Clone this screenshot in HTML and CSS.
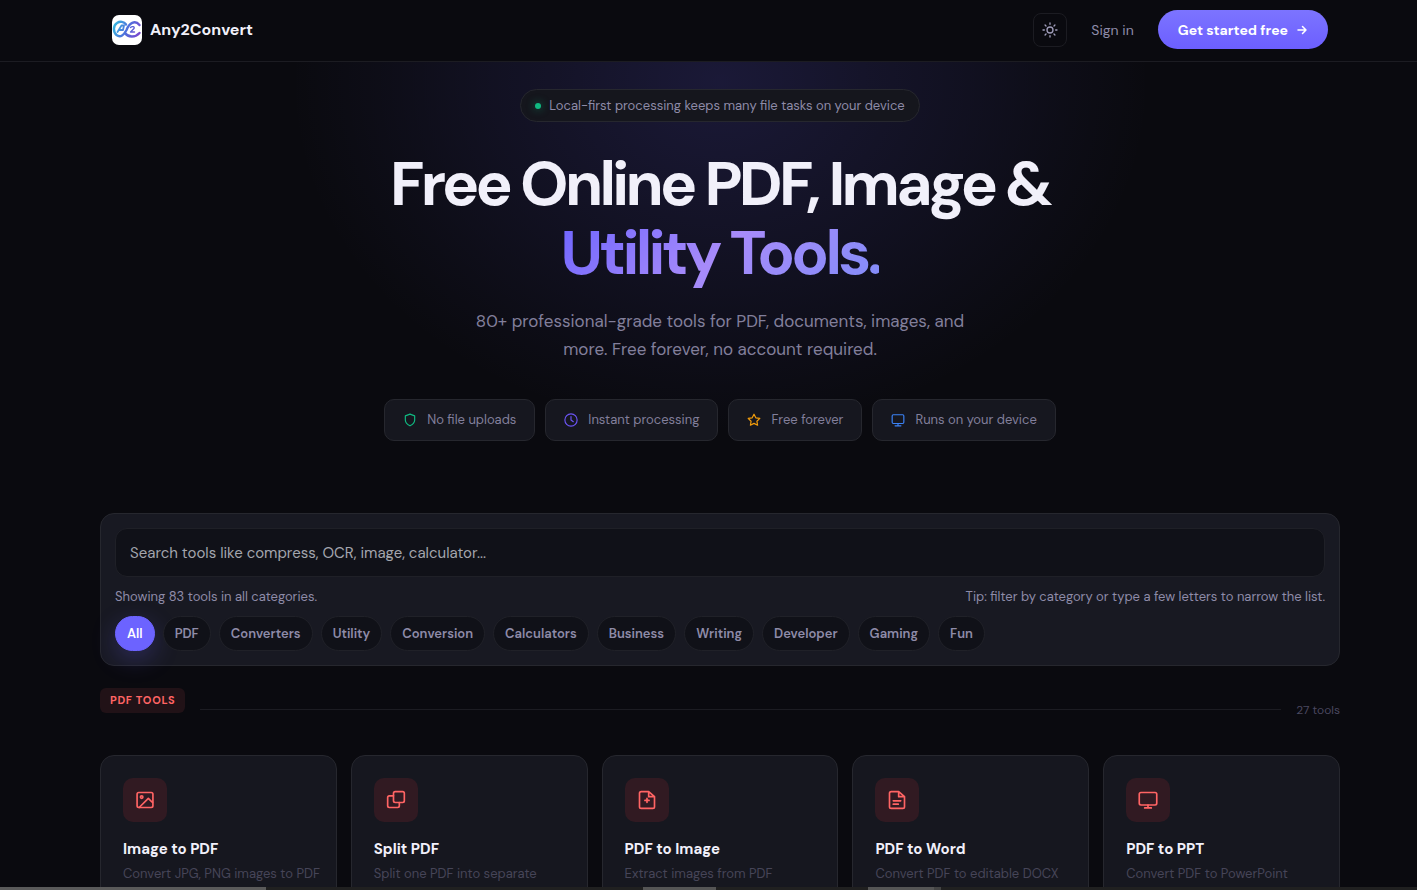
FILE: index.html
```html
<!DOCTYPE html>
<html lang="en">
<head>
    <meta charset="UTF-8">
    <meta name="viewport" content="width=device-width, initial-scale=1.0">
    <title>Any2Convert</title>
    <link rel="stylesheet" href="styles.css">
</head>
<body>
    <header class="site-header">
        <a href="#" class="brand">
            <svg class="brand-logo" viewBox="0 0 30 30" fill="none" aria-hidden="true">
                <defs>
                    <linearGradient id="logoGradient" gradientUnits="userSpaceOnUse" x1="2" y1="8" x2="28" y2="20">
                        <stop offset="0" stop-color="#35b8df"/>
                        <stop offset="0.5" stop-color="#4e70dc"/>
                        <stop offset="1" stop-color="#7a45cd"/>
                    </linearGradient>
                </defs>
                <rect width="30" height="30" rx="7" fill="#fff"/>
                <g stroke="url(#logoGradient)" stroke-linecap="round" stroke-linejoin="round">
                    <path d="M14 9.500C12 6.500 8 6 5 8C1 10.500 1 17 4.500 20C8.500 23 12 20 14.500 15C17 8 23 4.500 27.500 10" stroke-width="2.400"/>
                    <path d="M13 18C16 22.500 23 23 27.500 18" stroke-width="2.400"/>
                    <path d="M5.500 17L9.500 10.500H12L11 15M7.500 15H11" stroke-width="1.800"/>
                    <path d="M18.500 12.500C20 11 23 11.500 22 13.500L18.500 17H22.500" stroke-width="1.400"/>
                </g>
            </svg>
            <span>Any2Convert</span>
        </a>
        <nav class="header-actions">
            <button type="button" class="theme-toggle" aria-label="Toggle theme">
                <svg class="icon" viewBox="0 0 24 24">
                    <circle cx="12" cy="12" r="4.500"/>
                    <path d="M12 1.500v2M12 20.500v2M4.600 4.600l1.400 1.400M18 18l1.400 1.400M1.500 12h2M20.500 12h2M4.600 19.400l1.400-1.400M18 6l1.400-1.400"/>
                </svg>
            </button>
            <a href="#" class="sign-in">Sign in</a>
            <a href="#" class="cta">
                Get started free
                <svg class="icon" viewBox="0 0 24 24"><path d="M4 12h16M13 5l7 7-7 7"/></svg>
            </a>
        </nav>
    </header>

    <main>
        <section class="hero">
            <div class="hero-badge"><span class="dot"></span>Local-first processing keeps many file tasks on your device</div>
            <h1>Free Online PDF, Image &amp;<br><span class="gradient-text">Utility Tools.</span></h1>
            <p class="hero-sub">80+ professional-grade tools for PDF, documents, images, and more. Free forever, no account required.</p>
            <ul class="features">
                <li>
                    <svg class="icon green" viewBox="0 0 24 24"><path d="M12 22s8-4 8-10V5l-8-3-8 3v7c0 6 8 10 8 10z"/></svg>
                    No file uploads
                </li>
                <li>
                    <svg class="icon purple" viewBox="0 0 24 24"><circle cx="12" cy="12" r="10.500"/><path d="M12 6v6l4 3"/></svg>
                    Instant processing
                </li>
                <li>
                    <svg class="icon amber" viewBox="0 0 24 24"><path d="M12 2l3.100 6.300 6.900 1-5 4.900 1.200 6.800-6.200-3.200L5.800 21 7 14.200 2 9.300l6.900-1z"/></svg>
                    Free forever
                </li>
                <li>
                    <svg class="icon blue" viewBox="0 0 24 24"><rect x="2" y="3" width="20" height="15" rx="2"/><path d="M7 22h10M12 18v4"/></svg>
                    Runs on your device
                </li>
            </ul>
        </section>

        <div class="container">
            <section class="filter-panel">
                <input type="search" class="search-input" aria-label="Search tools" placeholder="Search tools like compress, OCR, image, calculator...">
                <div class="filter-meta">
                    <span>Showing 83 tools in all categories.</span>
                    <span>Tip: filter by category or type a few letters to narrow the list.</span>
                </div>
                <div class="filter-chips">
                    <button type="button" class="chip active">All</button>
                    <button type="button" class="chip">PDF</button>
                    <button type="button" class="chip">Converters</button>
                    <button type="button" class="chip">Utility</button>
                    <button type="button" class="chip">Conversion</button>
                    <button type="button" class="chip">Calculators</button>
                    <button type="button" class="chip">Business</button>
                    <button type="button" class="chip">Writing</button>
                    <button type="button" class="chip">Developer</button>
                    <button type="button" class="chip">Gaming</button>
                    <button type="button" class="chip">Fun</button>
                </div>
            </section>

            <section class="tools">
                <div class="section-head">
                    <h2>PDF TOOLS</h2>
                    <span class="rule"></span>
                    <span class="count">27 tools</span>
                </div>
                <div class="tool-grid">
                    <a href="#" class="tool-card">
                        <span class="tool-icon"><svg class="icon" viewBox="0 0 24 24"><rect x="2.500" y="3" width="19" height="18" rx="2"/><circle cx="8" cy="8.500" r="1.500"/><path d="M21 15l-5-5L5 21"/></svg></span>
                        <h3>Image to PDF</h3>
                        <p>Convert JPG, PNG images to PDF</p>
                    </a>
                    <a href="#" class="tool-card">
                        <span class="tool-icon"><svg class="icon" viewBox="0 0 24 24"><rect x="9" y="2" width="13" height="13" rx="2"/><path d="M9 7H4a2 2 0 0 0-2 2v10a2 2 0 0 0 2 2h10a2 2 0 0 0 2-2v-4"/></svg></span>
                        <h3>Split PDF</h3>
                        <p>Split one PDF into separate</p>
                    </a>
                    <a href="#" class="tool-card">
                        <span class="tool-icon"><svg class="icon" viewBox="0 0 24 24"><path d="M14 2H5a2 2 0 0 0-2 2v16a2 2 0 0 0 2 2h14a2 2 0 0 0 2-2V8zM14 2v6h6M12 10v5M9.500 12.500h5"/></svg></span>
                        <h3>PDF to Image</h3>
                        <p>Extract images from PDF</p>
                    </a>
                    <a href="#" class="tool-card">
                        <span class="tool-icon"><svg class="icon" viewBox="0 0 24 24"><path d="M14 2H5a2 2 0 0 0-2 2v16a2 2 0 0 0 2 2h14a2 2 0 0 0 2-2V8zM14 2v6h6M7.500 13h9M7.500 17h6"/></svg></span>
                        <h3>PDF to Word</h3>
                        <p>Convert PDF to editable DOCX</p>
                    </a>
                    <a href="#" class="tool-card">
                        <span class="tool-icon"><svg class="icon" viewBox="0 0 24 24"><rect x="1.500" y="3" width="21" height="15" rx="2"/><path d="M8 21.500h8M12 18v3"/></svg></span>
                        <h3>PDF to PPT</h3>
                        <p>Convert PDF to PowerPoint</p>
                    </a>
                </div>
            </section>
        </div>
    </main>
    <div class="bottom-strip"></div>
</body>
</html>
```

FILE: styles.css
```css
:root {
    --bg: #0a0a0f;
    --card: #16171f;
    --border: #26272e;
    --text: #f1f0fa;
    --muted: #8e8ba8;
    --accent: #6c63ff;
    --red: #ff6464;
}

* {
    margin: 0;
    padding: 0;
    box-sizing: border-box;
}

html {
    scrollbar-width: none;
}

body {
    background-color: var(--bg);
    color: var(--text);
    font-family: 'DM Sans', Inter, sans-serif;
    font-size: 13px;
    line-height: 20px;
    overflow-x: hidden;
}

a {
    color: inherit;
    text-decoration: none;
}

button,
input {
    font-family: inherit;
}

.icon {
    width: 14px;
    height: 14px;
    flex-shrink: 0;
    fill: none;
    stroke: currentColor;
    stroke-width: 2;
    stroke-linecap: round;
    stroke-linejoin: round;
}

/* Header */
.site-header {
    display: flex;
    align-items: center;
    justify-content: space-between;
    height: 62px;
    padding: 0 89px 2px 112px;
    border-bottom: 1px solid #1c1c22;
}

.brand {
    display: flex;
    align-items: center;
    gap: 8px;
    font-size: 16px;
    font-weight: 700;
}

.brand-logo {
    width: 30px;
    height: 30px;
}

.header-actions {
    display: flex;
    align-items: center;
    gap: 24px;
}

.theme-toggle {
    display: flex;
    align-items: center;
    justify-content: center;
    width: 34px;
    height: 34px;
    background: transparent;
    border: 1px solid #1c1c22;
    border-radius: 8px;
    color: #a09dba;
    cursor: pointer;
}

.theme-toggle .icon {
    width: 16px;
    height: 16px;
}

.sign-in {
    color: var(--muted);
    font-size: 14px;
}

.cta {
    display: flex;
    align-items: center;
    gap: 8px;
    height: 39px;
    padding: 0 20px;
    border-radius: 20px;
    background: linear-gradient(180deg, #7c74ff, #6c5fff);
    color: #fff;
    font-size: 14px;
    font-weight: 700;
}

.cta .icon {
    width: 12px;
    height: 12px;
    stroke-width: 3;
}

/* Hero */
.hero {
    display: flex;
    flex-direction: column;
    align-items: center;
    padding: 27px 77px 72px 100px;
    text-align: center;
    background: radial-gradient(ellipse 430px 350px at calc(50% + 12px) 20px, rgba(108, 99, 255, 0.17), transparent);
}

.hero-badge {
    display: flex;
    align-items: center;
    gap: 8px;
    height: 33px;
    padding: 0 14px;
    border: 1px solid var(--border);
    border-radius: 17px;
    background-color: #15161d;
    color: var(--muted);
}

.dot {
    width: 6px;
    height: 6px;
    border-radius: 50%;
    background-color: #10b981;
    box-shadow: 0 0 8px rgba(16, 185, 129, 0.6);
}

h1 {
    margin: 27px 0 20px;
    font-size: 62px;
    font-weight: 700;
    line-height: 69px;
    letter-spacing: -0.06em;
}

.gradient-text {
    background: linear-gradient(135deg, #6c63ff 0%, #a78bfa 50%, #818cf8 100%);
    -webkit-background-clip: text;
    background-clip: text;
    color: transparent;
}

.hero-sub {
    max-width: 520px;
    margin-bottom: 36px;
    color: #827f9b;
    font-size: 17px;
    line-height: 28px;
}

.features {
    display: flex;
    flex-wrap: wrap;
    justify-content: center;
    gap: 10px;
    list-style: none;
}

.features li {
    display: flex;
    align-items: center;
    gap: 10px;
    height: 42px;
    padding: 0 18px;
    border: 1px solid var(--border);
    border-radius: 10px;
    background-color: var(--card);
    color: #827f9b;
}

.green { color: #10b981; }
.purple { color: #6c55f5; }
.amber { color: #f59e0b; }
.blue { color: #3b82f6; }

/* Search and filters */
.container {
    padding: 0 77px 0 100px;
}

.filter-panel {
    display: flex;
    flex-direction: column;
    gap: 10px;
    padding: 14px;
    border: 1px solid var(--border);
    border-radius: 14px;
    background-color: #181922;
}

.search-input {
    width: 100%;
    height: 49px;
    padding: 0 14px;
    border: 1px solid #1f2027;
    border-radius: 12px;
    background-color: #101118;
    color: var(--text);
    font-size: 15px;
    outline: none;
}

.search-input::placeholder {
    color: #a3a5ad;
}

.search-input:focus {
    border-color: var(--accent);
}

.filter-meta {
    display: flex;
    justify-content: space-between;
    color: var(--muted);
    line-height: 19px;
}

.filter-chips {
    display: flex;
    flex-wrap: wrap;
    gap: 8px;
}

.chip {
    height: 35px;
    padding: 0 11px;
    border: 1px solid #202128;
    border-radius: 18px;
    background-color: #101118;
    color: var(--muted);
    font-size: 13px;
    font-weight: 600;
    cursor: pointer;
}

.chip.active {
    border-color: var(--accent);
    background-color: var(--accent);
    color: #fff;
    box-shadow: 0 8px 24px rgba(108, 99, 255, 0.25);
}

/* Tool sections */
.section-head {
    display: flex;
    align-items: center;
    gap: 15px;
    padding-top: 22px;
    margin-bottom: 24px;
}

.section-head h2 {
    margin-bottom: 18px;
    padding: 0 10px;
    border-radius: 6px;
    background-color: #211217;
    color: var(--red);
    font-size: 11px;
    font-weight: 700;
    line-height: 25px;
    letter-spacing: 0.06em;
}

.rule {
    flex: 1;
    height: 1px;
    background-color: #1c1c22;
}

.count {
    color: #4a4860;
    font-size: 12px;
}

.tool-grid {
    display: grid;
    grid-template-columns: repeat(5, minmax(0, 1fr));
    gap: 14px;
}

.tool-card {
    padding: 22px;
    border: 1px solid var(--border);
    border-radius: 14px;
    background-color: var(--card);
}

.tool-icon {
    display: flex;
    align-items: center;
    justify-content: center;
    width: 44px;
    height: 44px;
    margin-bottom: 16px;
    border-radius: 10px;
    background-color: #311a22;
    color: var(--red);
}

.tool-icon .icon {
    width: 20px;
    height: 20px;
}

.tool-card h3 {
    margin-bottom: 4px;
    font-size: 15px;
    font-weight: 700;
    line-height: 22px;
}

.tool-card p {
    color: #464558;
    white-space: nowrap;
}

/* Strip along the bottom edge of the window */
.bottom-strip {
    position: fixed;
    right: 0;
    bottom: 0;
    left: 0;
    height: 3px;
    background: linear-gradient(90deg,
        #5a5a5a 266px, #202020 266px, #202020 643px,
        #555 643px, #555 716px, #202020 716px, #202020 868px,
        #555 868px, #555 934px, #444 934px, #444 941px, #202020 941px);
}
```
